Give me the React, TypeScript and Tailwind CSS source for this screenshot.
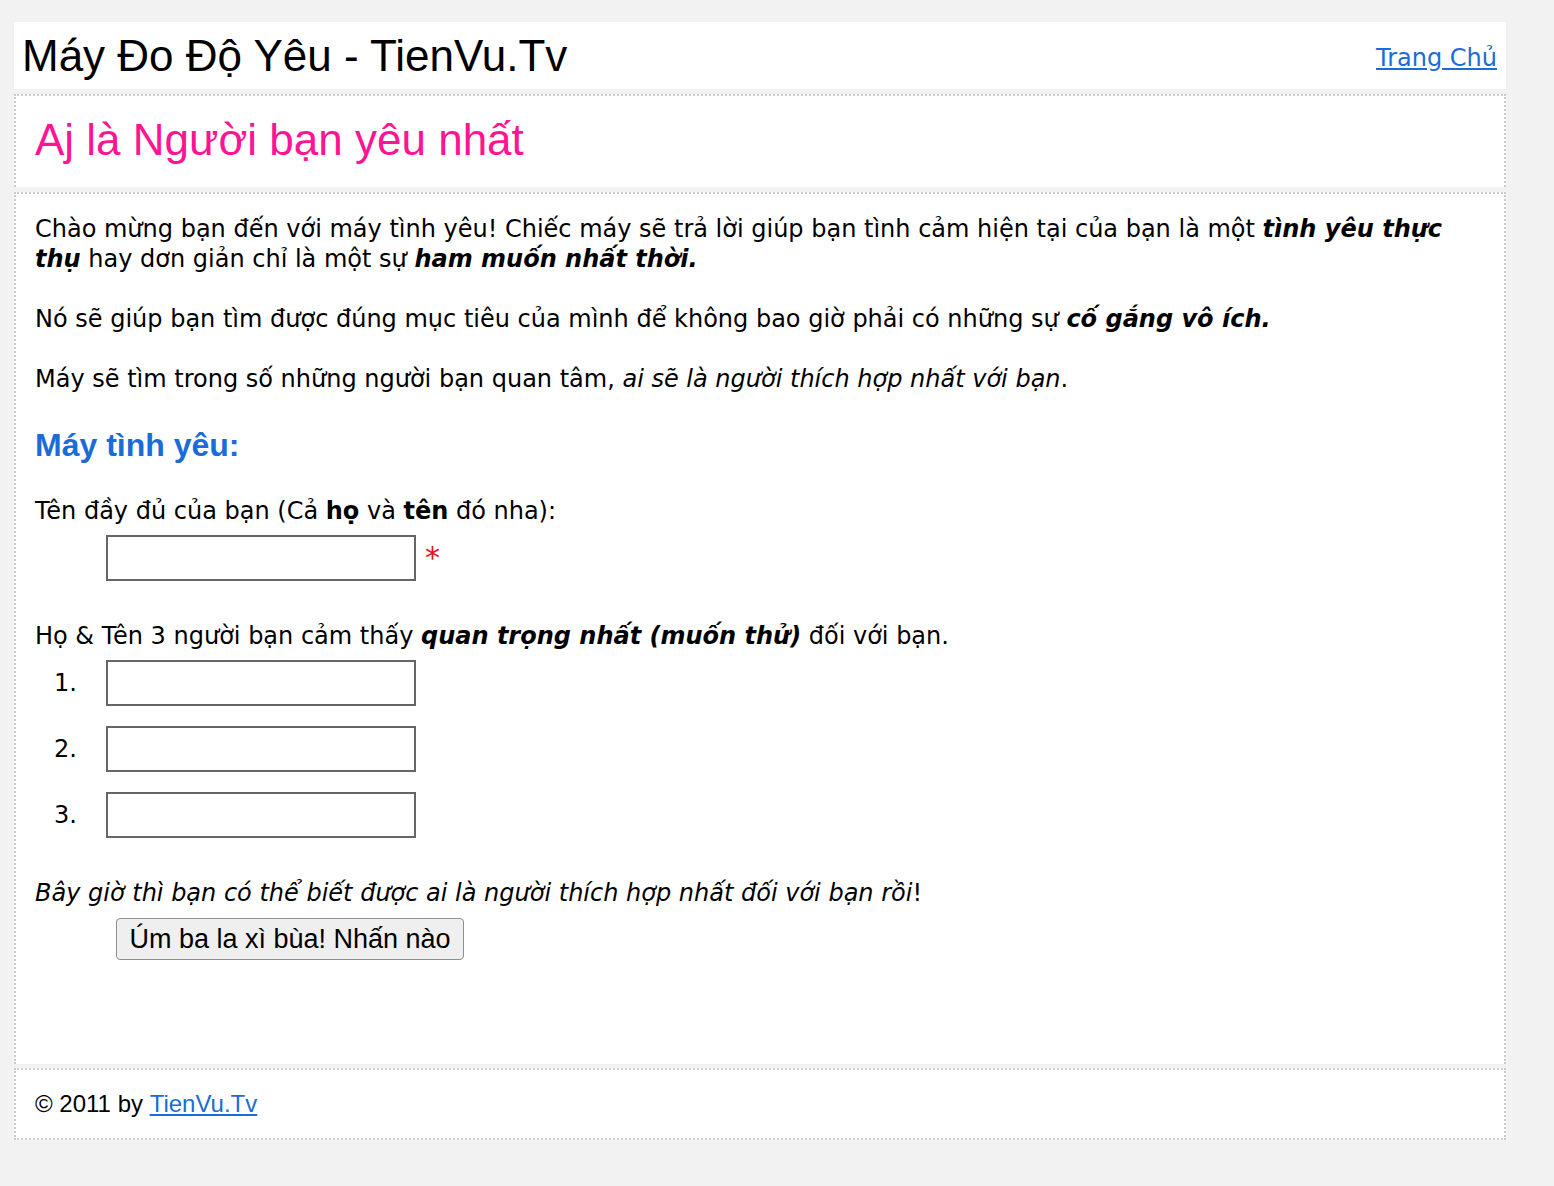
import React from 'react';

const body = "font-['DejaVu_Sans',Verdana,sans-serif]";
const arial = "font-['Liberation_Sans',Arial,sans-serif]";

function NameInput() {
  return <input type="text" className="h-[46px] w-[310px] border-2 border-[#666] bg-white px-2 outline-none" />;
}

export default function App() {
  const friends = ['1.', '2.', '3.'];
  return (
    <div className="min-h-[1186px] bg-[#f2f2f2] pt-[22px]">
      <div className="ml-[14px] w-[1492px]">
        <header className="flex h-[67px] items-center justify-between bg-white pl-[8px] pr-[9px]">
          <h1 className={`${arial} text-[44px] leading-none text-black`}>Máy Đo Độ Yêu - TienVu.Tv</h1>
          <a href="#" className={`${body} mt-[4px] text-[24px] text-[#1a6cd8] underline`}>
            Trang Chủ
          </a>
        </header>

        <section className="mt-[5px] h-[93px] border-x-2 border-t-2 border-dotted border-[#ccc] bg-white px-[19px] pt-[18px]">
          <h2 className={`${arial} text-[44px] leading-[52px] text-[#ff1493]`}>Aj là Người bạn yêu nhất</h2>
        </section>

        <main className={`${body} mt-[5px] h-[872px] border-x-2 border-t-2 border-dotted border-[#ccc] bg-white px-[19px] pt-[20px] text-[24px] leading-[30px] text-black`}>
          <p>
            Chào mừng bạn đến với máy tình yêu! Chiếc máy sẽ trả lời giúp bạn tình cảm hiện tại của bạn là một{' '}
            <b><i>tình yêu thực thụ</i></b> hay dơn giản chỉ là một sự <b><i>ham muốn nhất thời.</i></b>
          </p>
          <p className="mt-[30px]">
            Nó sẽ giúp bạn tìm được đúng mục tiêu của mình để không bao giờ phải có những sự <b><i>cố gắng vô ích.</i></b>
          </p>
          <p className="mt-[30px]">
            Máy sẽ tìm trong số những người bạn quan tâm, <i>ai sẽ là người thích hợp nhất với bạn</i>.
          </p>

          <h3 className={`${arial} mt-[33px] text-[32px] font-bold leading-[36px] text-[#1a6cd8]`}>Máy tình yêu:</h3>

          <p className="mt-[33px]">
            Tên đầy đủ của bạn (Cả <b>họ</b> và <b>tên</b> đó nha):
          </p>
          <div className="mt-[9px] flex items-center pl-[71px]">
            <NameInput />
            <span className="ml-[9px] text-[30px] leading-none text-[#e8141c]">*</span>
          </div>

          <p className="mt-[40px]">
            Họ &amp; Tên 3 người bạn cảm thấy <b><i>quan trọng nhất (muốn thử)</i></b> đối với bạn.
          </p>
          <div className="mt-[9px] flex flex-col gap-[20px]">
            {friends.map((n) => (
              <div key={n} className="flex items-center">
                <span className="w-[71px] pl-[19px]">{n}</span>
                <NameInput />
              </div>
            ))}
          </div>

          <p className="mt-[40px]">
            <i>Bây giờ thì bạn có thể biết được ai là người thích hợp nhất đối với bạn rồi</i>!
          </p>
          <div className="mt-[10px] pl-[81px]">
            <button className={`${arial} h-[42px] w-[348px] rounded-[4px] border border-[#8f8f8f] bg-[#efefef] text-[27px] leading-none text-black`}>
              Úm ba la xì bùa! Nhấn nào
            </button>
          </div>
        </main>

        <footer className={`${arial} mt-[4px] flex h-[72px] items-center border-2 border-dotted border-[#ccc] bg-white px-[19px] text-[24px] text-black`}>
          © 2011 by&nbsp;<a href="#" className="text-[#1a6cd8] underline">TienVu.Tv</a>
        </footer>
      </div>
    </div>
  );
}
